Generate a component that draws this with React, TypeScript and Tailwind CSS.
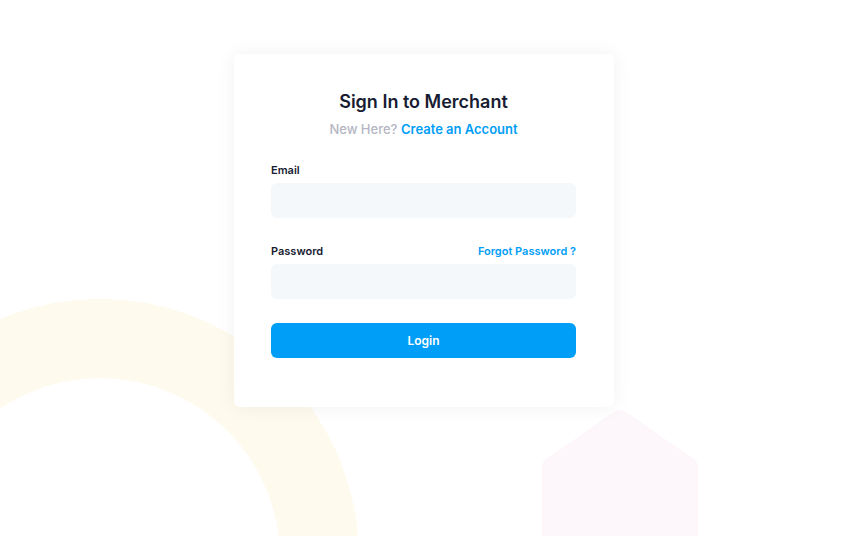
import React from "react";

export default function App() {
  return (
    <div
      className="relative w-[848px] h-[536px] overflow-hidden bg-white"
      style={{ fontFamily: "Inter, 'Noto Sans', sans-serif" }}
    >
      <svg className="absolute left-0 top-0" width="848" height="536" viewBox="0 0 848 536">
        <circle cx="100" cy="558" r="219.5" fill="none" stroke="#fffaee" strokeWidth="79" />
        <path
          d="M 548 458 Q 542 461 542 468 L 542 536 L 698 536 L 698 468 Q 698 461 692 458 L 626 412 Q 620 408 614 412 Z"
          fill="#fdf6fa"
        />
      </svg>
      <div className="relative flex justify-center pt-[54px]">
        <div className="w-[380px] h-[353px] bg-white rounded-[6px] shadow-[0_0_20px_rgba(0,0,0,0.06)] pl-[37px] pr-[38px] pt-[37px]">
          <div className="text-center">
            <h1 className="text-[18px] leading-[22px] font-semibold text-[#181c32]">Sign In to Merchant</h1>
            <div className="mt-[8px] text-[13px] leading-[16px] font-medium">
              <span className="text-[#b5b5c3]">New Here? </span>
              <span className="text-[#009ef7] font-semibold">Create an Account</span>
            </div>
          </div>
          <div className="mt-[26px]">
            <label className="block text-[11px] leading-[14px] font-semibold text-[#181c32]">Email</label>
            <div className="mt-[6px] h-[35px] rounded-[6px] bg-[#f5f8fa]" />
          </div>
          <div className="mt-[26px]">
            <div className="flex justify-between items-center">
              <label className="text-[11px] leading-[14px] font-semibold text-[#181c32]">Password</label>
              <span className="text-[11px] leading-[14px] font-semibold text-[#009ef7]">Forgot Password ?</span>
            </div>
            <div className="mt-[6px] h-[35px] rounded-[6px] bg-[#f5f8fa]" />
          </div>
          <button className="mt-[24px] w-full h-[35px] rounded-[6px] bg-[#009ef7] text-white text-[12px] font-semibold">
            Login
          </button>
        </div>
      </div>
    </div>
  );
}
